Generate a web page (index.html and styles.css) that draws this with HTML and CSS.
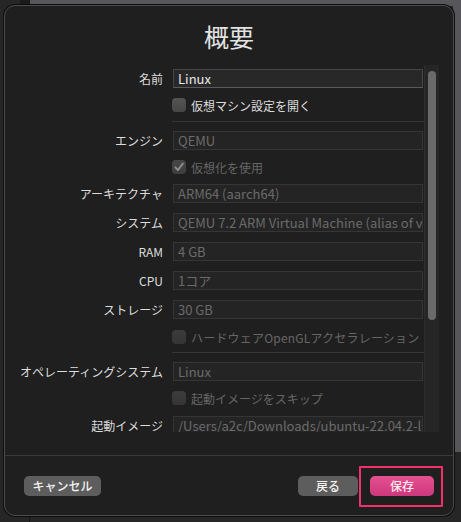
FILE: index.html
```html
<!DOCTYPE html>
<html lang="ja">
<head>
<meta charset="utf-8">
<title>概要</title>
<link rel="stylesheet" href="styles.css">
</head>
<body>
<div class="dialog">
  <h1 class="title">概要</h1>
  <div class="scroll">
    <div class="form">
      <div class="row frow"><span class="lbl">名前</span><div class="field on">Linux</div></div>
      <div class="row crow"><span class="lbl"></span><span class="cb"></span><span class="ctext on">仮想マシン設定を開く</span></div>
      <div class="row sep"><span class="lbl"></span><span class="line"></span></div>
      <div class="row frow"><span class="lbl">エンジン</span><div class="field">QEMU</div></div>
      <div class="row crow"><span class="lbl"></span><span class="cb checked"><svg viewBox="0 0 14 14" width="14" height="14"><path d="M3.4 7.4 L6 10 L10.8 3.6" fill="none" stroke="#8c8c8c" stroke-width="2" stroke-linecap="round" stroke-linejoin="round"/></svg></span><span class="ctext">仮想化を使用</span></div>
      <div class="row frow"><span class="lbl">アーキテクチャ</span><div class="field">ARM64 (aarch64)</div></div>
      <div class="row frow"><span class="lbl">システム</span><div class="field">QEMU 7.2 ARM Virtual Machine (alias of virt-7.2) (virt)</div></div>
      <div class="row frow"><span class="lbl">RAM</span><div class="field">4 GB</div></div>
      <div class="row frow"><span class="lbl">CPU</span><div class="field">1コア</div></div>
      <div class="row frow"><span class="lbl">ストレージ</span><div class="field">30 GB</div></div>
      <div class="row crow"><span class="lbl"></span><span class="cb"></span><span class="ctext wide">ハードウェアOpenGLアクセラレーション</span></div>
      <div class="row sep"><span class="lbl"></span><span class="line"></span></div>
      <div class="row frow"><span class="lbl">オペレーティングシステム</span><div class="field">Linux</div></div>
      <div class="row crow"><span class="lbl"></span><span class="cb"></span><span class="ctext">起動イメージをスキップ</span></div>
      <div class="row frow"><span class="lbl">起動イメージ</span><div class="field">/Users/a2c/Downloads/ubuntu-22.04.2-live-server-arm64.iso</div></div>
    </div>
    <div class="track"><div class="thumb"></div></div>
  </div>
  <div class="footer">
    <button class="btn">キャンセル</button>
    <div class="right">
      <button class="btn">戻る</button>
      <button class="btn primary">保存</button>
    </div>
  </div>
  <div class="highlight"></div>
</div>
</body>
</html>
```

FILE: styles.css
```css
html, body {
  margin: 0;
  padding: 0;
}
body {
  width: 461px;
  height: 522px;
  overflow: hidden;
  background-color: #262626;
  background-image:
    linear-gradient(#57575b, #57575b),
    linear-gradient(#57575b, #57575b),
    linear-gradient(#1b1b1b, #1b1b1b),
    linear-gradient(#141414, #141414);
  background-size: 431px 6px, 8px 452px, 10px 6px, 1px 10px;
  background-position: 30px 0, 453px 0, 20px 0, 29px 514px;
  background-repeat: no-repeat;
  font-family: "Noto Sans CJK JP", "Noto Sans", sans-serif;
}
.dialog {
  position: relative;
  box-sizing: border-box;
  margin: 5px 0 0 4px;
  width: 450px;
  height: 511px;
  background: #1f1f1f;
  border: 1px solid #4b4b4d;
  border-radius: 11px;
  box-shadow: 0 0 0 1px #0e0e0e;
  display: flex;
  flex-direction: column;
}
.title {
  margin: 0;
  height: 59px;
  flex-shrink: 0;
  box-sizing: border-box;
  padding-top: 14px;
  font-size: 25px;
  line-height: 32px;
  font-weight: 400;
  text-align: center;
  color: #e2e2e2;
}
.scroll {
  height: 367px;
  flex-shrink: 0;
  display: flex;
  overflow: hidden;
}
.form {
  width: 418px;
  padding-top: 4px;
  display: flex;
  flex-direction: column;
}
.row {
  display: flex;
  align-items: center;
  flex-shrink: 0;
}
.lbl {
  flex: 0 0 158px;
  margin-right: 10px;
  text-align: right;
  font-size: 12px;
  color: #dddddd;
  white-space: nowrap;
}
.frow { height: 19px; }
.crow { height: 18px; }
.sep { height: 1px; }
.frow + .frow { margin-top: 10px; }
.frow + .crow { margin-top: 8px; }
.crow + .frow { margin-top: 8px; }
.crow + .sep { margin-top: 7px; }
.sep + .frow { margin-top: 9px; }
.frow:nth-child(10) + .crow { margin-top: 9px; }
.frow:nth-child(10) + .crow + .sep { margin-top: 6px; }
.crow + .frow:last-child { margin-top: 9px; }
.field {
  box-sizing: border-box;
  flex: 0 0 250px;
  width: 250px;
  height: 19px;
  padding: 0 4px;
  background: #242424;
  border: 1px solid #353535;
  font-size: 13px;
  line-height: 17px;
  color: #6b6b6b;
  white-space: nowrap;
  overflow: hidden;
}
.field.on {
  background: #282828;
  border-color: #464646;
  border-bottom-color: #5a5a5a;
  color: #e8e8e8;
}
.line {
  flex: 0 0 252px;
  height: 1px;
  margin-left: -1px;
  background: #363636;
}
.cb {
  box-sizing: border-box;
  flex: 0 0 14px;
  width: 14px;
  height: 14px;
  margin-left: -1px;
  border-radius: 4px;
  background: linear-gradient(#3c3c3c, #353535);
  display: flex;
}
.row:nth-child(2) .cb {
  background: linear-gradient(#545454, #474747);
}
.cb.checked {
  background: linear-gradient(#464646, #3e3e3e);
}
.ctext {
  margin-left: 5px;
  font-size: 12px;
  color: #666666;
  white-space: nowrap;
}
.ctext.wide { letter-spacing: 0.2px; }
.ctext.on { color: #dcdcdc; }
.track {
  margin-left: 1px;
  width: 15px;
  height: 367px;
  flex-shrink: 0;
  background: #262626;
  border-left: 1px solid #2d2d2d;
  box-sizing: border-box;
  padding: 6px 0 0 3px;
}
.thumb {
  width: 8px;
  height: 249px;
  border-radius: 4px;
  background: #6a6a6a;
}
.footer {
  margin-top: 23px;
  flex-shrink: 0;
  border-top: 1px solid #3a3a3a;
  padding: 20px 19px 0 19px;
  display: flex;
  justify-content: space-between;
  align-items: flex-start;
}
.right {
  display: flex;
  gap: 12px;
}
.btn {
  height: 20px;
  padding: 0;
  border: none;
  border-radius: 5px;
  background: #5d5d5d;
  color: #f2f2f2;
  font-family: "Noto Sans CJK JP", sans-serif;
  font-size: 12px;
  font-weight: 500;
  line-height: 20px;
  width: 77px;
}
.right .btn { width: 60px; }
.right .btn.primary {
  width: 64px;
  background: linear-gradient(#e5508f, #cc387c);
  color: #fbe9f1;
}
.highlight {
  position: absolute;
  left: 354px;
  top: 460px;
  width: 80px;
  height: 37px;
  border: 2px solid #f4306c;
  border-radius: 1px;
}
```
